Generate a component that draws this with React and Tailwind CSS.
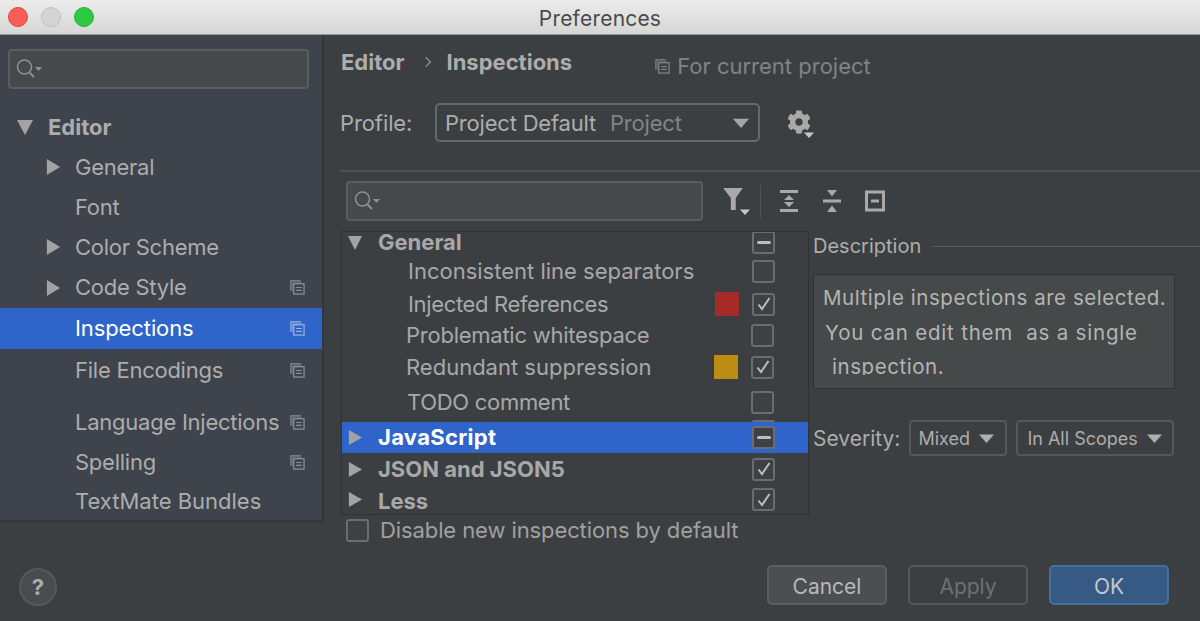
import React from "react";
import { FaCog } from "react-icons/fa";

const font = { fontFamily: "Inter, 'Liberation Sans', sans-serif" };

// Small triangle used by the tree rows and combo boxes
const Arrow = ({ dir = "right", className = "" }) => (
  <svg viewBox="0 0 16 16" preserveAspectRatio="none" className={className}>
    {dir === "right" ? <path d="M1 0 L16 8 L1 16 Z" fill="currentColor" /> : <path d="M0 1 L16 1 L8 16 Z" fill="currentColor" />}
  </svg>
);

const ProjectIcon = ({ className = "" }) => (
  <svg viewBox="0 0 16 16" className={className} fill="none" stroke="currentColor" strokeWidth="1.3">
    <path d="M11.5 1 H1 V11.5" />
    <path d="M3 12 V3 H13" opacity="0.6" />
    <rect x="4" y="4" width="11" height="11" />
    <path d="M6.5 8 H12.5 M6.5 11 H12.5" />
  </svg>
);

const SearchIcon = () => (
  <svg viewBox="0 0 28 24" className="w-7 h-6 shrink-0 text-[#8a9199]" fill="none" stroke="currentColor">
    <circle cx="9.5" cy="10" r="7" strokeWidth="1.5" />
    <path d="M14.5 15.5 L19 20" strokeWidth="2" />
    <path d="M20 10 H27 L23.5 14 Z" fill="currentColor" stroke="none" />
  </svg>
);

const SideRow = ({ label, h, arrow, project, selected, tracking = "tracking-[-0.25px]" }) => (
  <div className={`${h} ${tracking} pl-[75px] relative flex items-center pr-[17px] text-[22px] ${selected ? "bg-[#2f65ca] text-white" : "text-[#adadad]"}`}>
    {arrow && <Arrow className="absolute left-[46px] w-[14px] h-[16px] text-[#a3a3a3]" />}
    <span className="flex-1 whitespace-nowrap">{label}</span>
    {project && <ProjectIcon className={`w-[15px] h-[15px] ${selected ? "text-[#9fb4d8]" : "text-[#8d9196]"}`} />}
  </div>
);

const Check = ({ state, className = "" }) => (
  <div className={`w-[23px] h-[23px] shrink-0 rounded-[3px] border-2 border-[#6a6d6f] bg-[#3e4143] flex items-center justify-center ${className}`}>
    {state === "on" && (
      <svg viewBox="0 0 16 16" className="w-4 h-4 text-[#bdbdbd]" fill="none" stroke="currentColor" strokeWidth="2">
        <path d="M2.5 8.5 L6 13 L13.5 2" />
      </svg>
    )}
    {state === "mixed" && <div className="w-[14px] h-[3px] rounded-sm bg-[#bdbdbd]" />}
  </div>
);

const TreeRow = ({ label, h, group, open, selected, state, swatch, peek, labelClass = "", pad = "pl-[66px]", right = "pr-[33px]" }) => (
  <div className={`${h} ${group ? "pl-[36px]" : pad} ${right} relative flex items-center text-[22px] whitespace-nowrap ${selected ? "bg-[#2f65ca] text-white tracking-[0.3px]" : "text-[#a8a8a8]"} ${group ? "font-bold" : ""}`}>
    {group && <Arrow dir={open ? "down" : "right"} className="absolute left-[6px] w-[14px] h-[15px] text-[#a3a3a3]" />}
    <span className={`flex-1 ${labelClass}`}>{label}</span>
    {swatch && <div className={`w-6 h-6 mr-[13px] ${swatch}`} />}
    <Check state={state} className={selected ? "border-[#2e3236] bg-[#3c3f41]" : ""} />
    {/* top edge of the next checkbox, scrolled in behind the row below */}
    {peek && <div className="absolute right-[33px] bottom-0 w-[23px] h-[2px] rounded-t-[3px] border-t-2 border-[#6a6d6f]" />}
  </div>
);

const Btn = ({ label, className }) => (
  <div className={`w-[120px] h-10 pt-[3px] rounded-[5px] border-2 flex items-center justify-center text-[21px] ${className}`}>{label}</div>
);

export default function App() {
  return (
    <div style={font} className="w-[1200px] h-[621px] overflow-hidden flex flex-col bg-[#3c3f41] text-[#adadad]">
      {/* Title bar */}
      <div className="relative h-[35px] shrink-0 flex items-center justify-center pt-[3px] bg-gradient-to-b from-[#ececec] to-[#d6d6d6] border-b border-[#9b9b9b] text-[21px] text-[#4a4a4a] tracking-[0.2px]">
        <div className="absolute left-[8px] top-[7px] flex gap-[13px]">
          <div className="w-5 h-5 rounded-full bg-[#fc5d57] border border-[#e0443e]" />
          <div className="w-5 h-5 rounded-full bg-[#d4d4d4] border border-[#c0c0c0]" />
          <div className="w-5 h-5 rounded-full bg-[#2ec943] border border-[#22b535]" />
        </div>
        Preferences
      </div>

      <div className="flex-1 flex min-h-0">
        {/* Left column */}
        <div className="w-[324px] shrink-0 flex flex-col">
          <div className="h-[487px] shrink-0 bg-[#3e434c] border-r-2 border-b-2 border-[#33363a] flex flex-col">
            <div className="pt-[14px] pl-2 pr-[13px] pb-[18px]">
              <div className="h-10 rounded-[4px] border-2 border-[#5a5d5f] bg-[#45494a] flex items-center pl-[5px]">
                <SearchIcon />
              </div>
            </div>
            <div className="h-10 pl-[48px] relative flex items-center text-[22px] font-bold text-[#adadad]">
              <Arrow dir="down" className="absolute left-[17px] w-4 h-4 text-[#a3a3a3]" />
              Editor
            </div>
            <SideRow label="General" h="h-10" arrow />
            <SideRow label="Font" h="h-10" />
            <SideRow label="Color Scheme" h="h-10" arrow />
            <SideRow label="Code Style" h="h-[41px]" arrow project />
            <SideRow label="Inspections" h="h-[41px]" project selected tracking="tracking-[-0.1px]" />
            <SideRow label="File Encodings" h="h-[42px]" project />
            <div className="h-[11px]" />
            <SideRow label="Language Injections" h="h-10" project />
            <SideRow label="Spelling" h="h-10" project />
            <SideRow label="TextMate Bundles" h="h-[38px]" tracking="tracking-normal" />
          </div>
          <div className="pt-[46px] pl-[19px]">
            <div className="w-[38px] h-[38px] rounded-full border-2 border-[#56595b] bg-[#484c4e] flex items-center justify-center text-[22px] font-bold text-[#adadad]">?</div>
          </div>
        </div>

        {/* Right column */}
        <div className="flex-1 min-w-0 flex flex-col">
          <div className="h-[68px] flex items-center pl-[17px] pb-[14px] whitespace-nowrap">
            <span className="text-[22px] font-bold">Editor</span>
            <svg viewBox="0 0 10 14" className="w-[8px] h-[12px] ml-[19px] mr-[15px] text-[#9a9a9a]" fill="none" stroke="currentColor" strokeWidth="1.4"><path d="M2 1 L8 7 L2 13" /></svg>
            <span className="text-[22px] font-bold">Inspections</span>
            <ProjectIcon className="w-[15px] h-[15px] ml-[83px] mr-[7px] mt-[8px] text-[#80868b]" />
            <span className="text-[22px] text-[#7f8386] mt-[8px]">For current project</span>
          </div>

          <div className="h-[39px] flex items-center pl-[16px] text-[22px]">
            <span className="w-[95px] tracking-[-0.1px] pt-[2px]">Profile:</span>
            <div className="w-[325px] h-[39px] rounded-[5px] border-2 border-[#66696b] bg-[#3c3f41] flex items-center pl-[8px] pr-[9px] tracking-[-0.2px] whitespace-nowrap">
              <span className="pt-[1px]">Project Default</span>
              <span className="ml-[14px] pt-[1px] flex-1 text-[#808487]">Project</span>
              <Arrow dir="down" className="w-4 h-[10px] text-[#a5a5a5]" />
            </div>
            <div className="relative ml-[27px] mt-[3px] w-7 h-7 text-[#a9a9a9]">
              <FaCog className="w-6 h-6" />
              <Arrow dir="down" className="absolute right-[1px] bottom-0 w-[10px] h-[6px] text-[#c8c8c8]" />
            </div>
          </div>

          <div className="ml-[16px] mt-[28px] h-[2px] bg-[#4e5153]" />

          <div className="mt-[9px] h-[40px] flex items-center pl-[22px]">
            <div className="w-[357px] h-[40px] rounded-[4px] border-2 border-[#5a5d5f] bg-[#45494a] flex items-center pl-[5px]">
              <SearchIcon />
            </div>
            <div className="relative w-7 h-7 ml-[19px] text-[#a9a9a9]">
              <svg viewBox="0 0 20 22" className="w-[22px] h-[24px]"><path d="M1 1 H19 L12.5 10 V21 H8 V10 Z" fill="currentColor" /></svg>
              <Arrow dir="down" className="absolute right-0 bottom-0 w-[10px] h-[6px] text-[#c8c8c8]" />
            </div>
            <div className="w-px h-[33px] bg-[#505355] ml-[10px] mr-[17px]" />
            <svg viewBox="0 0 22 24" className="w-[22px] h-6 text-[#a9a9a9]" fill="currentColor">
              <rect x="2" y="1" width="18" height="3" /><rect x="2" y="20" width="18" height="3" />
              <path d="M11 6 L16 11 H6 Z M6 13 H16 L11 18 Z" />
            </svg>
            <svg viewBox="0 0 22 24" className="w-[22px] h-6 ml-[21px] text-[#a9a9a9]" fill="currentColor">
              <rect x="2" y="10.5" width="18" height="3" />
              <path d="M6 1 H16 L11 7.5 Z M11 16.5 L16 23 H6 Z" />
            </svg>
            <svg viewBox="0 0 22 24" className="w-[22px] h-6 ml-[21px] text-[#a9a9a9]" fill="none" stroke="currentColor" strokeWidth="3">
              <rect x="2.5" y="3" width="17" height="18" />
              <path d="M7 12 H15" />
            </svg>
          </div>

          <div className="mt-[10px] flex">
            {/* Inspection tree */}
            <div className="ml-[17px] w-[468px] h-[284px] shrink-0 border border-[#2f3235] overflow-hidden flex flex-col">
              <TreeRow label="General" h="h-[21px]" group open state="mixed" />
              <TreeRow label="Inconsistent line separators" h="h-[37px]" />
              <TreeRow label="Injected References" h="h-[28px]" state="on" swatch="bg-[#a52a28]" labelClass="tracking-[-0.35px]" />
              <TreeRow label="Problematic whitespace" h="h-[34px]" pad="pl-[64px]" right="pr-[34px]" labelClass="tracking-[-0.25px]" />
              <TreeRow label="Redundant suppression" h="h-[30px]" pad="pl-[64px]" right="pr-[34px]" state="on" swatch="bg-[#bd8c14]" />
              <TreeRow label="TODO comment" h="h-[40px]" pad="pl-[65px]" right="pr-[34px]" peek labelClass="tracking-[-0.3px]" />
              <TreeRow label="JavaScript" h="h-[31px]" group selected state="mixed" />
              <TreeRow label="JSON and JSON5" h="h-[32px]" group state="on" />
              <TreeRow label="Less" h="h-[29px]" group state="on" labelClass="pt-[3px]" />
            </div>

            {/* Description panel */}
            <div className="ml-[4px] flex-1 min-w-0">
              <div className="h-[30px] flex items-center text-[20px]">
                Description
                <div className="flex-1 h-px bg-[#5a5a5a] ml-[11px]" />
              </div>
              <div className="mt-[13px] w-[362px] h-[115px] bg-[#45494a] border border-[#303335] pl-[9px] text-[20.5px] tracking-[0.55px] text-[#b4b4b4]">
                <div className="h-[100px] overflow-hidden whitespace-nowrap leading-[34.5px] pt-[6px]">
                  <div>Multiple inspections are selected.</div>
                  <div className="pl-[2px] tracking-[0.8px]">You can edit them&nbsp; as a single</div>
                  <div className="pl-[9px]">inspection.</div>
                </div>
              </div>
              <div className="mt-[31px] flex items-center text-[21px]">
                <span className="pt-[1px]">Severity:</span>
                <div className="ml-[9px] w-[98px] h-[36px] rounded-[4px] border-2 border-[#555859] flex items-center pl-[7px] text-[18px] whitespace-nowrap">
                  Mixed
                  <Arrow dir="down" className="ml-[9px] w-[15px] h-[9px] text-[#b0b0b0]" />
                </div>
                <div className="ml-[9px] w-[158px] h-[36px] rounded-[4px] border-2 border-[#555859] flex items-center pl-[9px] text-[18px] whitespace-nowrap">
                  In All Scopes
                  <Arrow dir="down" className="ml-[9px] w-[15px] h-[9px] text-[#b0b0b0]" />
                </div>
              </div>
            </div>
          </div>

          <div className="mt-[3px] h-[25px] pl-[22px] flex items-center gap-[11px] text-[22px] tracking-[-0.1px] text-[#a0a0a0] whitespace-nowrap">
            <Check />
            Disable new inspections by default
          </div>

          <div className="mt-[22px] pl-[443px] flex gap-[21px]">
            <Btn label="Cancel" className="border-[#5c5f61] bg-[#4b4f51] text-[#b8b8b8]" />
            <Btn label="Apply" className="border-[#55585a] text-[#6d7073]" />
            <Btn label="OK" className="border-[#436f9e] bg-[#375a85] text-[#c4c8cc]" />
          </div>
        </div>
      </div>
    </div>
  );
}
